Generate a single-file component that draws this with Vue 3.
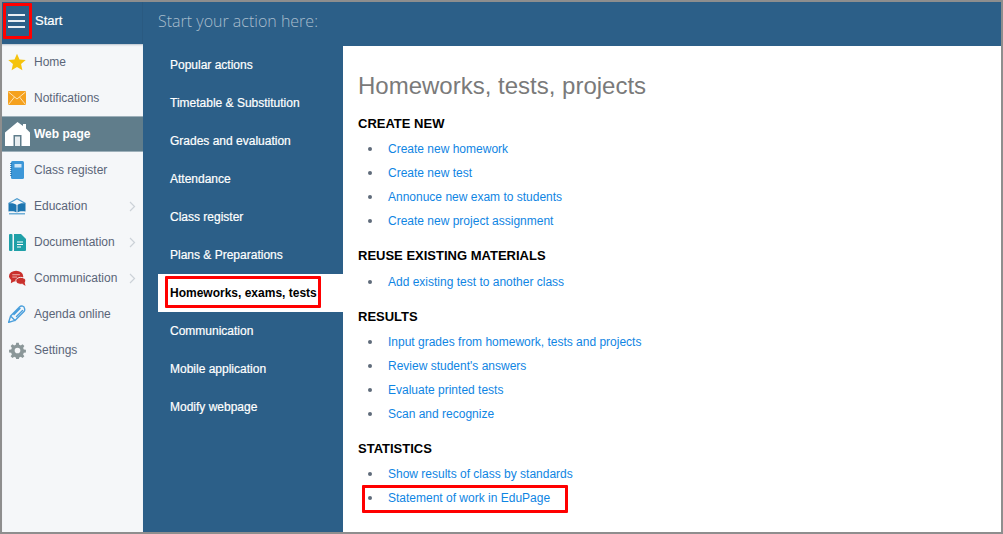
<script setup>
const side = [
  { label: 'Home', icon: 'star' },
  { label: 'Notifications', icon: 'mail' },
  { label: 'Web page', icon: 'house', active: true },
  { label: 'Class register', icon: 'note' },
  { label: 'Education', icon: 'book', arrow: true },
  { label: 'Documentation', icon: 'doc', arrow: true },
  { label: 'Communication', icon: 'chat', arrow: true },
  { label: 'Agenda online', icon: 'pen' },
  { label: 'Settings', icon: 'gear' }
]
const sub = ['Popular actions', 'Timetable & Substitution', 'Grades and evaluation', 'Attendance', 'Class register', 'Plans & Preparations', 'Homeworks, exams, tests', 'Communication', 'Mobile application', 'Modify webpage']
const sections = [
  { title: 'CREATE NEW', links: ['Create new homework', 'Create new test', 'Annonuce new exam to students', 'Create new project assignment'] },
  { title: 'REUSE EXISTING MATERIALS', links: ['Add existing test to another class'] },
  { title: 'RESULTS', links: ['Input grades from homework, tests and projects', "Review student's answers", 'Evaluate printed tests', 'Scan and recognize'] },
  { title: 'STATISTICS', links: ['Show results of class by standards', 'Statement of work in EduPage'] }
]
</script>

<template>
  <div class="frame">
    <header class="top">
      <div class="start">
        <button class="burger"><span></span><span></span><span></span></button>
        <span class="start-label">Start</span>
      </div>
      <div class="prompt">Start your action here:</div>
    </header>
    <div class="body">
      <nav class="side">
        <a v-for="s in side" :key="s.label" class="side-item" :class="{ active: s.active }">
          <span class="ico">
            <svg v-if="s.icon === 'star'" width="18" height="18" viewBox="0 0 20 20"><path fill="#f5c30d" d="M10 .8l2.800 6.300 6.900.7-5.200 4.500 1.500 6.800-6-3.500-6 3.500 1.500-6.800L.3 7.800l6.900-.7z"/></svg>
            <svg v-else-if="s.icon === 'mail'" width="18" height="14" viewBox="0 0 18 14"><rect width="18" height="14" rx=".5" fill="#f5a11e"/><path d="M.5 1L9 8l8.500-7M.5 13.500L6.500 6M17.500 13.500L11.500 6" fill="none" stroke="#fde3b5" stroke-width="1"/></svg>
            <svg v-else-if="s.icon === 'house'" width="25" height="26" viewBox="0 0 25 26"><path fill="#fff" d="M12.500 1L18 5V3h3v4.500l4 4V25H0V11.500z"/><rect x="8.500" y="14" width="8" height="11" fill="#607d8b"/><rect x="10" y="15.500" width="5" height="9.500" fill="#e8edf0"/></svg>
            <svg v-else-if="s.icon === 'note'" width="14" height="18" viewBox="0 0 14 18"><rect x="1" width="13" height="18" rx="1.500" fill="#3d97d8"/><rect x="4.500" y="3" width="7" height="3.500" fill="#cfe6f7"/><path d="M1 2v14" stroke="#1f6ea8" stroke-width="1.500" stroke-dasharray="1 1"/></svg>
            <svg v-else-if="s.icon === 'book'" width="18" height="17" viewBox="0 0 18 17"><path d="M.5 5.500L9 .8l8.500 4.700" fill="none" stroke="#4d9ccf" stroke-width="1.200"/><path fill="#1c75b0" d="M.500 5.500C4 5 7 5.500 8.500 7v7.500C7 13.300 4 13 .500 13.500zM17.500 5.500C14 5 11 5.500 9.500 7v7.500c1.500-1.200 4.500-1.500 8-1z"/><path d="M1 15.800h16" stroke="#4d9ccf" stroke-width="1.200"/></svg>
            <svg v-else-if="s.icon === 'doc'" width="17" height="17" viewBox="0 0 17 17"><rect width="3.500" height="17" rx="1" fill="#1fa0a8"/><path fill="#1fa0a8" d="M5 0h7l5 5v11a1 1 0 0 1-1 1H5z"/><path d="M8 8h6M8 10.500h6M8 13h4" stroke="#fff" stroke-width="1.200"/></svg>
            <svg v-else-if="s.icon === 'chat'" width="17" height="17" viewBox="0 0 18 17"><ellipse cx="7.500" cy="6" rx="7.500" ry="5.800" fill="#c9302c"/><path fill="#c9302c" d="M2.500 9l-.5 4.500 5-3z"/><ellipse cx="12.500" cy="11" rx="5.300" ry="3.700" fill="#c9302c" stroke="#f5f7f9"/><path fill="#c9302c" d="M14 14l3.500 2.500-1-4z"/><path d="M3.500 4.500h8M3.500 7h5" stroke="#f2b8b5"/></svg>
            <svg v-else-if="s.icon === 'pen'" width="18" height="18" viewBox="0 0 18 18"><path fill="none" stroke="#4a9fdc" stroke-width="1.400" stroke-linecap="round" stroke-linejoin="round" d="M.6 17.400l2-6.400L11.500 2c1.800-1.800 4.800-1 5 1.500M.6 17.400l6.400-2 9-9c.8-.8.800-2 .5-2.900M2.600 11l4.400 4.400M6 9.500L12 3.500M8.500 11.500l6-6"/></svg>
            <svg v-else width="17" height="17" viewBox="0 0 24 24"><path fill="#8b9799" d="M13.800 1l.5 3a8.200 8.200 0 0 1 2.300 1l2.500-1.800 2.600 2.600-1.800 2.500c.4.700.8 1.500 1 2.300l3 .5v3.700l-3 .5a8.200 8.200 0 0 1-1 2.300l1.800 2.500-2.600 2.600-2.500-1.800c-.7.400-1.500.8-2.300 1l-.5 3h-3.600l-.5-3a8.200 8.200 0 0 1-2.300-1l-2.500 1.800-2.600-2.600 1.800-2.500a8.200 8.200 0 0 1-1-2.300l-3-.5v-3.700l3-.5c.2-.8.6-1.600 1-2.300L2.300 5.800l2.600-2.600 2.500 1.800c.7-.4 1.500-.8 2.300-1l.5-3zM12 8a4 4 0 1 0 0 8 4 4 0 0 0 0-8z"/></svg>
          </span>
          <span class="side-label">{{ s.label }}</span>
          <svg v-if="s.arrow" class="chev" width="7" height="11" viewBox="0 0 7 11"><path d="M1 1l4.500 4.500L1 10" fill="none" stroke="#ccd2d8" stroke-width="1.200"/></svg>
        </a>
      </nav>
      <nav class="sub">
        <a v-for="s in sub" :key="s" class="sub-item" :class="{ on: s === 'Homeworks, exams, tests' }">
          {{ s }}
          <i v-if="s === 'Homeworks, exams, tests'" class="mark mark-sub"></i>
        </a>
      </nav>
      <main class="content">
        <h1>Homeworks, tests, projects</h1>
        <section v-for="sec in sections" :key="sec.title">
          <h2>{{ sec.title }}</h2>
          <ul>
            <li v-for="l in sec.links" :key="l">
              <a>{{ l }}</a>
              <i v-if="l === 'Statement of work in EduPage'" class="mark mark-link"></i>
            </li>
          </ul>
        </section>
      </main>
    </div>
  </div>
</template>

<style scoped>
.frame {
  box-sizing: border-box;
  width: 1003px;
  height: 534px;
  border: 2px solid #8e8e8e;
  display: flex;
  flex-direction: column;
  overflow: hidden;
  font-family: "Liberation Sans", Arial, sans-serif;
  background: #2c5f88;
}
.top {
  height: 42px;
  display: flex;
  flex: none;
  background: #2c5f88;
  color: #fff;
}
.start {
  width: 141px;
  display: flex;
  align-items: flex-start;
  flex: none;
  border-right: 1px solid #2a5a81;
  box-sizing: border-box;
}
.start-label {
  font-size: 13px;
  line-height: 38px;
  margin-left: 3px;
  -webkit-text-stroke: 0.2px #fff;
}
.burger {
  box-sizing: border-box;
  width: 29px;
  height: 36px;
  margin: 1px 0 0 1px;
  padding: 0 2px;
  background: none;
  border: 3px solid #f00;
  border-radius: 1px;
  display: flex;
  flex-direction: column;
  justify-content: center;
  gap: 4px;
}
.burger span { display: block; height: 2px; width: 17px; background: #e8eef3; }
.prompt {
  font-family: "Open Sans", sans-serif;
  font-weight: 300;
  font-size: 16px;
  color: #a9bdcd;
  margin-left: 15px;
  line-height: 38px;
}
.body { flex: 1; display: flex; min-height: 0; }
.side {
  width: 141px;
  flex: none;
  background: #f5f7f9;
  box-shadow: inset 0 2px 2px -1px #b9c3cc;
}
.side-item {
  height: 36px;
  display: flex;
  align-items: center;
  position: relative;
  font-size: 12px;
  color: #5a6578;
}
.side-item.active {
  background: #607d8b;
  color: #fff;
  font-weight: bold;
  box-shadow: inset 0 1px 0 #9db0ba, inset 0 -1px 0 #9db0ba;
}
.ico { width: 30px; flex: none; display: flex; justify-content: center; }
.side-label { margin-left: 2px; }
.chev { position: absolute; left: 127px; top: 13px; }
.sub {
  width: 200px;
  flex: none;
  padding-top: 2px;
  background: #2c5f88;
}
.sub-item {
  height: 38px;
  margin-left: 15px;
  padding-left: 12px;
  display: flex;
  align-items: center;
  position: relative;
  color: #fff;
  font-size: 12px;
  -webkit-text-stroke: 0.2px #fff;
}
.sub-item.on { background: #fff; color: #000; font-weight: bold; -webkit-text-stroke: 0; }
.mark {
  position: absolute;
  border: 3px solid #f00;
  border-radius: 1px;
  pointer-events: none;
}
.mark-sub { left: 7px; top: 2px; width: 150px; height: 26px; }
.mark-link { left: 4px; top: -1px; width: 200px; height: 22px; }
.content {
  flex: 1;
  margin-top: 2px;
  background: #fff;
  padding: 24px 0 0 15px;
  min-width: 0;
}
h1 {
  margin: 0 0 13px;
  font-size: 24px;
  line-height: 32px;
  font-weight: normal;
  color: #7a7a7a;
}
h2 {
  margin: 0 0 4px;
  font-size: 13px;
  line-height: 18px;
  font-weight: bold;
  color: #000;
}
ul { list-style: none; margin: 0 0 14.33px; padding: 0; }
section:nth-of-type(2) h2 { margin-bottom: 5px; }
section:nth-of-type(2) ul { margin-bottom: 13.33px; }
li {
  position: relative;
  height: 24px;
  line-height: 24px;
  padding-left: 30px;
  font-size: 12px;
}
li::before {
  content: "";
  position: absolute;
  left: 10px;
  top: 10px;
  width: 4px;
  height: 4px;
  border-radius: 50%;
  background: #5f6b7a;
}
li a { color: #0f85e3; }
</style>
